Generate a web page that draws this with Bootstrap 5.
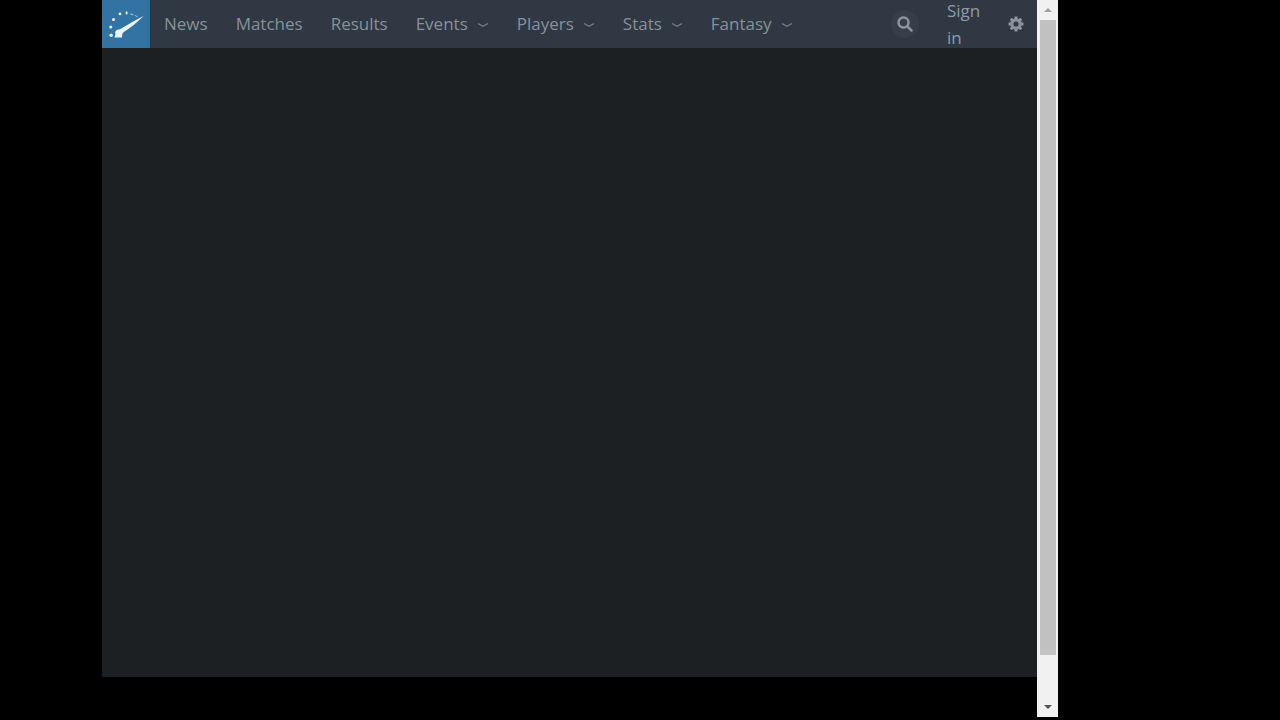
<!DOCTYPE html>
<html lang="en">
<head>
<meta charset="utf-8">
<meta name="viewport" content="width=device-width, initial-scale=1">
<title>News</title>
<link href="https://cdn.jsdelivr.net/npm/bootstrap@5.3.0/dist/css/bootstrap.min.css" rel="stylesheet">
<style>
body { background: #000; font-family: "Open Sans", "Noto Sans", sans-serif; font-size: 17px; line-height: 27px; }
.viewer { padding: 0 222px 3px 102px; }
.page-pane { padding-bottom: 40px; min-width: 0; }
.page-body { background: #1c2023; }
.topbar { background: #303843; height: 48px; padding: 0; }
.brand-tile { width: 48px; height: 48px; background: #3273a4; margin-right: 14px; }
.menu { gap: 28px; padding-bottom: 2px; }
.menu a { color: #87919a; text-decoration: none; display: flex; align-items: center; gap: 9px; }
.tool { background: none; border: 0; padding: 0; }
.search-btn { width: 28px; height: 28px; background: #353e49; margin-right: 28px; }
.account { width: 40px; margin-right: 21px; }
.account a { color: #8c9bab; text-decoration: none; }
.settings-btn { margin-right: 13px; }
.scroll-track { width: 21px; background: #f1f1f1; padding: 0 2px 0 3px; }
.scroll-end { height: 20px; }
.scroll-thumb { background: #c1c1c1; flex: 635 1 0; }
.scroll-rest { flex: 42 1 0; }
</style>
</head>
<body>
<div class="viewer d-flex vh-100">
  <div class="page-pane d-flex flex-column flex-grow-1">
    <nav class="topbar navbar navbar-expand flex-nowrap" aria-label="Main">
      <a class="brand-tile flex-shrink-0" href="#" aria-label="Home">
        <svg class="d-block" width="48" height="48" viewBox="0 0 48 48" fill="#e9f3fa" aria-hidden="true">
          <path d="M41.500 16C34 19.500 26 24.500 18 29.200C14 29.500 12.500 31.500 13.500 34L12.500 37.500H20C20.300 35 20 33.500 21.500 32.300C29 27.500 36 21.500 41.500 16Z"/>
          <circle cx="9.200" cy="35.200" r="1.700"/><circle cx="8.800" cy="27" r="1.600"/>
          <circle cx="11.500" cy="19.500" r="1.500"/><circle cx="18" cy="13.900" r="1.400"/>
          <ellipse cx="24.600" cy="12.900" rx="1" ry="1.700"/>
          <path d="M28.500 13.300L31.500 14.200L31 15.500L28.200 14.300ZM33 15L36 16.500L35.500 17.300L32.700 15.800Z" opacity=".6"/>
        </svg>
      </a>
      <div class="menu d-flex">
        <a href="#">News</a>
        <a href="#">Matches</a>
        <a href="#">Results</a>
        <a href="#">Events <svg width="12" height="8" viewBox="0 0 12 8" fill="none" stroke="#737d87" stroke-width="1.300"><path d="M1 4.500L6 7.300L11 4.500"/></svg></a>
        <a href="#">Players <svg width="12" height="8" viewBox="0 0 12 8" fill="none" stroke="#737d87" stroke-width="1.300"><path d="M1 4.500L6 7.300L11 4.500"/></svg></a>
        <a href="#">Stats <svg width="12" height="8" viewBox="0 0 12 8" fill="none" stroke="#737d87" stroke-width="1.300"><path d="M1 4.500L6 7.300L11 4.500"/></svg></a>
        <a href="#">Fantasy <svg width="12" height="8" viewBox="0 0 12 8" fill="none" stroke="#737d87" stroke-width="1.300"><path d="M1 4.500L6 7.300L11 4.500"/></svg></a>
      </div>
      <div class="d-flex align-items-center ms-auto">
        <button class="tool search-btn rounded-circle d-flex align-items-center justify-content-center" type="button" aria-label="Search">
          <svg width="16" height="16" viewBox="0 0 16 16" fill="none" stroke="#8b949e" stroke-width="2.500" stroke-linecap="round"><circle cx="6.500" cy="6.500" r="5"/><path d="M10.500 10.500L14.500 14.500"/></svg>
        </button>
        <div class="account"><a href="#">Sign in</a></div>
        <button class="tool settings-btn d-flex" type="button" aria-label="Settings">
          <svg width="16" height="16" viewBox="-8 -8 16 16" aria-hidden="true">
            <circle r="4.200" fill="none" stroke="#8b949e" stroke-width="3.200"/>
            <path d="M0-7.500V-5M0 7.500V5M-7.500 0H-5M7.500 0H5M-5.200-5.200L-3.500-3.500M5.200 5.200L3.500 3.500M-5.200 5.200L-3.500 3.500M5.200-5.200L3.500-3.500" stroke="#8b949e" stroke-width="3"/>
          </svg>
        </button>
      </div>
    </nav>
    <main class="page-body flex-grow-1"></main>
  </div>
  <div class="scroll-track d-flex flex-column flex-shrink-0" aria-hidden="true">
    <div class="scroll-end d-flex align-items-center justify-content-center"><svg width="8" height="4" viewBox="0 0 8 4"><path d="M0 4L4 0L8 4Z" fill="#a0a0a0"/></svg></div>
    <div class="scroll-thumb"></div>
    <div class="scroll-rest"></div>
    <div class="scroll-end d-flex align-items-center justify-content-center"><svg width="8" height="4" viewBox="0 0 8 4"><path d="M0 0L4 4L8 0Z" fill="#505050"/></svg></div>
  </div>
</div>
<script src="https://cdn.jsdelivr.net/npm/bootstrap@5.3.0/dist/js/bootstrap.bundle.min.js"></script>
</body>
</html>
